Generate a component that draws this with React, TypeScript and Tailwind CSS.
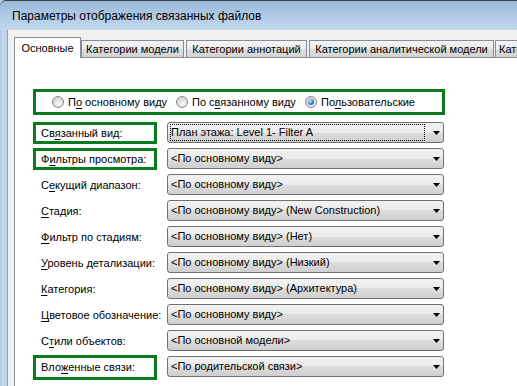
import React from "react";

type Acc = [string, string, string];

function A({ t }: { t: Acc }) {
  return (
    <span className="whitespace-nowrap">
      {t[0]}
      <span className="underline underline-offset-[2px]">{t[1]}</span>
      {t[2]}
    </span>
  );
}

function Radio({ checked }: { checked?: boolean }) {
  return (
    <span className="w-[12px] h-[12px] shrink-0 rounded-full border border-[#8a8b8c] bg-[radial-gradient(circle_at_60%_65%,#fbfbfb,#d9d9d9_60%,#c4c4c4)] flex items-center justify-center">
      {checked && (
        <span className="w-[6px] h-[6px] rounded-full bg-[radial-gradient(circle_at_35%_35%,#c8e8ff,#2f7fd0_55%,#0d4388)]" />
      )}
    </span>
  );
}

function Arrow() {
  return (
    <svg width="7" height="4" viewBox="0 0 7 4" className="block">
      <polygon points="0,0 7,0 3.5,4" fill="#000" />
    </svg>
  );
}

function Dropdown({ text, focused }: { text: string; focused?: boolean }) {
  return (
    <div className="ml-[10px] w-[277px] h-[21px] shrink-0 rounded-[3px] border border-[#707070] bg-[linear-gradient(#f2f2f2,#ebebeb_50%,#dddddd_50%,#cfcfcf)] flex items-center">
      <div
        className={
          "ml-[2px] w-[255px] h-[17px] flex items-center whitespace-nowrap overflow-hidden border " +
          (focused ? "border-dotted border-black" : "border-transparent")
        }
      >
        {text}
      </div>
      <div className="flex-1 flex justify-end pr-[3px]">
        <Arrow />
      </div>
    </div>
  );
}

type Row = { label: Acc; value: string; box?: "a" | "b"; focused?: boolean };

const rows: Row[] = [
  { label: ["Св", "я", "занный вид:"], value: "План этажа: Level 1- Filter A", box: "a", focused: true },
  { label: ["Ф", "и", "льтры просмотра:"], value: "<По основному виду>", box: "a" },
  { label: ["С", "е", "кущий диапазон:"], value: "<По основному виду>" },
  { label: ["", "С", "тадия:"], value: "<По основному виду> (New Construction)" },
  { label: ["", "Ф", "ильтр по стадиям:"], value: "<По основному виду> (Нет)" },
  { label: ["", "У", "ровень детализации:"], value: "<По основному виду> (Низкий)" },
  { label: ["", "К", "атегория:"], value: "<По основному виду> (Архитектура)" },
  { label: ["", "Ц", "ветовое обозначение:"], value: "<По основному виду>" },
  { label: ["С", "т", "или объектов:"], value: "<По основной модели>" },
  { label: ["Вло", "ж", "енные связи:"], value: "<По родительской связи>", box: "b" },
];

export default function App() {
  return (
    <div className="w-[517px] h-[386px] overflow-hidden flex flex-col bg-[#bcd2ea] font-['Liberation_Sans',Arial,sans-serif] text-black text-[11px]">
      <div className="h-[30px] shrink-0 border-t border-[#3c3c3c] rounded-tl-[6px] bg-[linear-gradient(#9bb8da,#b2cbe7_55%,#c4d8ee)] pl-[12px] flex items-center text-[12px] text-black">
        Параметры отображения связанных файлов
      </div>
      <div className="flex-1 flex min-h-0">
        <div className="w-[8px] shrink-0 bg-[linear-gradient(90deg,#aec7e4,#c3d7ee_40%,#bcd2ea)] border-r border-[#8fa6c2]" />
        <div className="flex-1 min-w-0 bg-[#f0f0f0] pl-[6px] pt-[7px] flex flex-col">
          <div className="h-[20px] flex items-end shrink-0">
            <div className="relative z-10 -mb-px w-[67px] h-[21px] shrink-0 bg-white border border-b-0 border-[#898c95] flex items-center justify-center">
              Основные
            </div>
            <div className="w-[103px] h-[17px] shrink-0 border border-b-0 border-[#898c95] bg-[linear-gradient(#f3f3f3,#ebebeb_50%,#dedede_50%,#d3d3d3)] flex items-center justify-center pt-px">
              Категории модели
            </div>
            <div className="ml-[2px] w-[121px] h-[17px] shrink-0 border border-b-0 border-[#898c95] bg-[linear-gradient(#f3f3f3,#ebebeb_50%,#dedede_50%,#d3d3d3)] flex items-center justify-center pt-px whitespace-nowrap">
              Категории аннотаций
            </div>
            <div className="ml-[2px] w-[185px] h-[17px] shrink-0 border border-b-0 border-[#898c95] bg-[linear-gradient(#f3f3f3,#ebebeb_50%,#dedede_50%,#d3d3d3)] flex items-center justify-center pt-px whitespace-nowrap">
              Категории аналитической модели
            </div>
            <div className="ml-[1px] w-[110px] h-[17px] shrink-0 border border-b-0 border-[#898c95] bg-[linear-gradient(#f3f3f3,#ebebeb_50%,#dedede_50%,#d3d3d3)] flex items-center pl-[3px] pt-px whitespace-nowrap overflow-hidden">
              Категории импорта
            </div>
          </div>
          <div className="flex-1 bg-white border-l border-t border-[#898c95] pl-[18px] pt-[31px]">
            <div className="w-[412px] h-[26px] border-[3px] border-[#0b7a1e] flex items-center pl-[16px]">
              <div className="w-[124px] flex items-center gap-[4px] shrink-0">
                <Radio />
                <A t={["П", "о", " основному виду"]} />
              </div>
              <div className="w-[129px] flex items-center gap-[4px] shrink-0">
                <Radio />
                <A t={["По с", "в", "язанному виду"]} />
              </div>
              <div className="flex items-center gap-[4px] shrink-0">
                <Radio checked />
                <A t={["По", "л", "ьзовательские"]} />
              </div>
            </div>
            <div className="mt-[7px] flex flex-col gap-[5px]">
              {rows.map((r, i) => (
                <div key={i} className="h-[21px] flex items-start">
                  {r.box ? (
                    <div
                      className={
                        "w-[124px] shrink-0 border-[3px] border-[#0b7a1e] pl-[5px] flex items-center " +
                        (r.box === "a" ? "h-[22px]" : "h-[25px] -mt-px")
                      }
                    >
                      <A t={r.label} />
                    </div>
                  ) : (
                    <div className="w-[124px] h-[21px] shrink-0 pl-[8px] pt-px flex items-center">
                      <A t={r.label} />
                    </div>
                  )}
                  <Dropdown text={r.value} focused={r.focused} />
                </div>
              ))}
            </div>
          </div>
        </div>
      </div>
    </div>
  );
}
